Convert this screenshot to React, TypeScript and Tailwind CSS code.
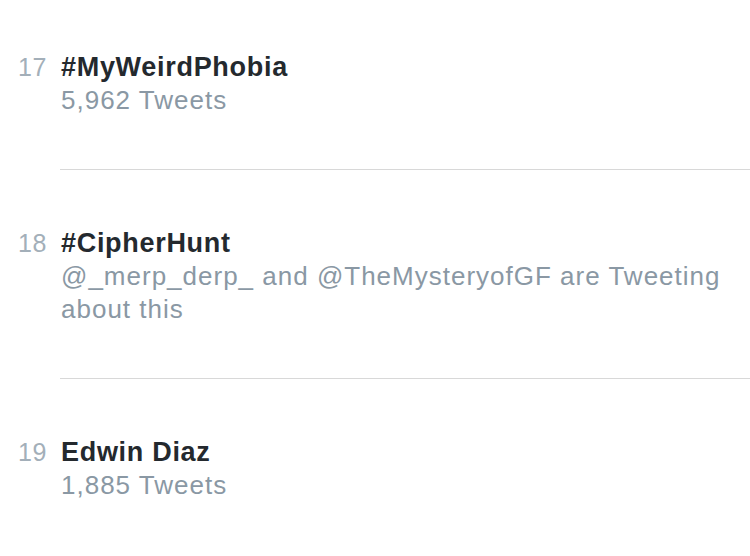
import React from "react";

type Trend = { n: number; title: string; sub: string[] };

const trends: Trend[] = [
  { n: 17, title: "#MyWeirdPhobia", sub: ["5,962 Tweets"] },
  { n: 18, title: "#CipherHunt", sub: ["@_merp_derp_ and @TheMysteryofGF are Tweeting", "about this"] },
  { n: 19, title: "Edwin Diaz", sub: ["1,885 Tweets"] },
];

function Row({ t }: { t: Trend }) {
  return (
    <div className="flex items-baseline pl-[18px]">
      <div className="w-[43px] shrink-0 text-[25px] leading-[34px] text-[#a3afb9] tracking-[0.5px]">{t.n}</div>
      <div className="flex flex-col">
        <div className="text-[27px] leading-[34px] font-bold text-[#24292e] tracking-[0.7px]">{t.title}</div>
        {t.sub.map((s, i) => (
          <div key={i} className="text-[26px] leading-[33px] text-[#8a98a4] tracking-[1px] whitespace-nowrap">
            {s}
          </div>
        ))}
      </div>
    </div>
  );
}

export default function App() {
  return (
    <div
      className="w-[750px] h-[556px] bg-white overflow-hidden pt-[50px]"
      style={{ fontFamily: '"Liberation Sans", Arial, sans-serif' }}
    >
      <Row t={trends[0]} />
      <div className="ml-[60px] mt-[52px] mb-[56px] border-t border-[#d8d8d8]" />
      <Row t={trends[1]} />
      <div className="ml-[60px] mt-[52px] mb-[56px] border-t border-[#d8d8d8]" />
      <Row t={trends[2]} />
    </div>
  );
}
